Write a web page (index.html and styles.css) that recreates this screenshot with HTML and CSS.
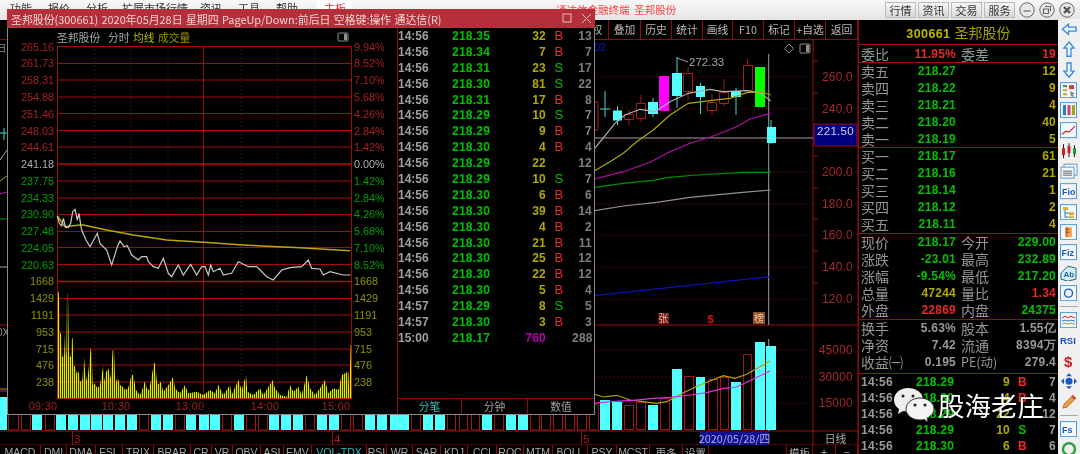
FILE: index.html
```html
<!DOCTYPE html>
<html lang="zh">
<head>
<meta charset="utf-8">
<title>通达信金融终端 圣邦股份</title>
<link rel="stylesheet" href="styles.css">
</head>
<body>
<div class="app">
  <header class="topbar">
    <nav class="menu"><span>功能</span><span>报价</span><span>分析</span><span>扩展市场行情</span><span>资讯</span><span>工具</span><span>帮助</span></nav>
    <span class="board">主板</span>
    <span class="apptitle">通达信金融终端&nbsp; 圣邦股份</span>
    <div class="top-actions">
      <button class="tbtn">行情</button><button class="tbtn">资讯</button><button class="tbtn">交易</button><button class="tbtn">服务</button>
      <svg class="round" viewBox="0 0 16 16"><circle cx="8" cy="8" r="7.2"/><path class="rg" d="M4.5 9h7"/></svg>
      <svg class="round" viewBox="0 0 16 16"><circle cx="8" cy="8" r="7.2"/><path class="rg" d="M6 4.5h5.5v4.500M4.500 7h5v4.500h-5z"/></svg>
      <svg class="round" viewBox="0 0 16 16"><circle cx="8" cy="8" r="7.2"/><path class="rg thick" d="M5 5l6 6M11 5l-6 6"/></svg>
    </div>
  </header>

  <div class="main">
    <section class="chart">
      <div class="toolbar">
        <span class="b1">复权</span><span class="b2">叠加</span><span class="b3">历史</span><span class="b3">统计</span><span class="b4">画线</span><span class="b3">F10</span><span class="b3">标记</span><span class="b3">+自选</span><span class="b2">返回</span>
      </div>
      <svg class="kline" viewBox="0 40 858 405" width="858" height="405">
        <path class="grid-solid" d="M0 325H858M0 431H858M0 445H858M813 40V445M858 40V445"/>
        <path class="grid-dot" d="M594 77H813M594 109H813M594 141H813M594 172H813M594 204H813M594 235H813M594 267H813M594 299H813M594 350H813M594 377H813M594 403H813"/>
        <path class="tick" d="M813 93h5M813 125h5M813 156h5M813 188h5M813 219h5M813 251h5M813 283h5M813 61h5"/>
        <text class="axis" x="853" y="81">260.0</text>
        <text class="axis" x="853" y="113">240.0</text>
        <text class="axis" x="853" y="145">220.0</text>
        <text class="axis" x="853" y="176">200.0</text>
        <text class="axis" x="853" y="208">180.0</text>
        <text class="axis" x="853" y="239">160.0</text>
        <text class="axis" x="853" y="271">140.0</text>
        <text class="axis" x="853" y="303">120.0</text>
        <text class="axis" x="853" y="354">45000</text>
        <text class="axis" x="853" y="381">30000</text>
        <text class="axis" x="853" y="407">15000</text>
        <text class="blue02" x="594" y="51">02</text>
        <path class="icon-line" d="M789 44l4.500 4.500-4.500 4.500-4.500-4.500z"/>
        <rect class="icon-line" x="800" y="44" width="10" height="9" rx="1"/><rect class="icon-fill" x="806" y="45" width="3" height="7"/>

        <path class="line-gray" d="M594 138H813M768.700 54V325M768.700 339V431"/>
        <rect class="pricebox" x="814" y="124" width="43" height="22"/>
        <text class="pricetxt" x="835.500" y="135">221.50</text>

        <path class="wick-r" d="M629 110V114M629 119V125M641 95V103M641 119V122M688 67V73M688 92V100M712 94V102M712 110V115M724 79V92M724 104V107M747.500 59V65"/>
        <path class="wick-c" d="M605 91V117M600 109H610M617.500 106V125M653 98V117M677 57V108M700.500 83V114M736 88V115M771 120V144"/>
        <path class="cand-c" d="M613 110.500h9v10h-9zM648 102h10v12h-10zM672 73h10v23h-10zM696 86h9v11h-9zM731 91h10v6h-10zM767 127h9v16h-9z"/>
        <path class="cand-r" d="M594 102h4v28h-4M624.500 114.500h9v5h-9zM636.500 103.500h9v15h-9zM683.500 73.500h9v18h-9zM707.500 102.500h9v8h-9zM719.500 92.500h9v11h-9zM743.500 65.500h9v25h-9z"/>
        <rect class="cand-m" x="659" y="76" width="10" height="35"/>
        <rect class="cand-g" x="755" y="67" width="10" height="40"/>
        <path class="peak" d="M677 58l11 4"/>
        <text class="peaktxt" x="689" y="66">272.33</text>

        <polyline class="ma ma-w" points="594.700,148.300 615,123.300 625,115 640,109.300 655,111.700 670,101.700 688.300,93.300 710,89.300 723.300,91.700 746.700,90.700 760,92.700 770.700,101"/>
        <polyline class="ma ma-y" points="594.700,170.700 610,161.700 623.300,153.300 636.700,141.700 653.300,130 670,115 688.300,103.300 710,100.700 730,98.300 746.700,92.700 760,91.700 770.700,95"/>
        <polyline class="ma ma-m" points="594.700,179 623.300,171.700 650,162.300 670,151.700 690,143.300 710,137.300 736.700,126.700 750,119 770.700,113.300"/>
        <polyline class="ma ma-g" points="594.700,187.300 623.300,183.300 653.300,180.300 666.700,177.700 696.700,175 743.300,172.300 770.700,172.300"/>
        <polyline class="ma ma-w2" points="594.700,210.700 623.300,206 656.700,202.300 690,197.300 740,192.700 770.700,190"/>
        <polyline class="ma ma-b" points="594,295.700 770,276.700"/>

        <rect class="sig-r" x="658" y="313" width="11" height="11"/><text class="sigtxt" x="663.500" y="322">张</text>
        <text class="sigd" x="710.500" y="323">$</text>
        <rect class="sig-o" x="753" y="312" width="12" height="12"/><text class="sigtxt" x="759" y="322">榜</text>

        <path class="vol-c" d="M0 397h7v33h-7zM32 405h10v25h-10zM56 405h10v25h-10zM68 405h10v25h-10zM80 405h10v25h-10zM91 405h11v25h-11zM103 405h10v25h-10zM115 405h10v25h-10zM127 405h10v25h-10zM151 405h10v25h-10zM163 405h10v25h-10zM186 405h10v25h-10zM199 405h10v25h-10zM210 405h10v25h-10zM234 405h10v25h-10zM269 405h10v25h-10zM281 405h10v25h-10zM293 405h10v25h-10zM317 405h10v25h-10zM329 405h10v25h-10zM365 405h10v25h-10zM377 405h10v25h-10zM390 405h10v25h-10zM400 405h9v25h-9zM423 405h10v25h-10zM435 405h10v25h-10zM482 405h10v25h-10zM506 405h10v25h-10zM518 405h10v25h-10zM600 400h10v30h-10zM612 402h10v28h-10zM648 405h10v25h-10zM672 369h10v61h-10zM696 377h9v53h-9zM731 382h10v48h-10zM755 342h10v88h-10zM766 346h10v84h-10z"/>
        <path class="vol-r" d="M8.500 405h10v25h-10zM21.500 405h9v25h-9zM45.500 405h9v25h-9zM139.500 405h9v25h-9zM175.500 405h9v25h-9zM222.500 405h9v25h-9zM246.500 405h9v25h-9zM258.500 405h9v25h-9zM305.500 405h9v25h-9zM341.500 405h9v25h-9zM353.500 405h9v25h-9zM411.500 405h9v25h-9zM447.500 405h8v25h-8zM459.500 405h8v25h-8zM471.500 405h8v25h-8zM494.500 405h9v25h-9zM530.500 405h9v25h-9zM541.500 405h9v25h-9zM553.500 405h9v25h-9zM565.500 405h9v25h-9zM577.500 405h9v25h-9zM589.500 405h9v25h-9zM624.500 405.500h9v24h-9zM636.500 402.500h9v27h-9zM660.500 398.500h9v31h-9zM684.500 376.500h9v53h-9zM708.500 379.500h9v50h-9zM720.500 377.500h8v52h-8zM743.500 354.500h8v75h-8z"/>
        <polyline class="ma ma-y" points="594.700,394.300 603.300,397 616.700,395.300 630,400 643.300,401.700 656.700,403.300 666.700,401.700 683.300,392.700 700,385 723.300,375.700 735,378.300 746.700,374.300 770,361"/>
        <polyline class="ma ma-mv" points="594.700,403.300 610,401.700 633.300,400.300 653.300,398.300 670,397.300 690,395 706.700,392.700 723.300,388.300 736.700,387 753.300,379 770,371"/>

        <text class="sliver" x="-4" y="52">日</text>
        <text class="sliver" x="-3" y="336">0X</text>
        <path class="wick-c" d="M4 128V140M0 133H7"/>
        <path class="line-gray thin" d="M0 160L7 150"/>
        <path class="sl-y" d="M0 181L7 176"/>
        <path class="sl-m" d="M0 194L7 192"/>
        <path class="sl-g" d="M0 219H7"/>
        <path class="line-gray thin" d="M0 267H7"/>
        <path class="sl-y" d="M0 389H7"/>
        <path class="sl-m" d="M0 391H7"/>

        <path class="grid-solid" d="M72.500 431V445M332.500 431V445M581.500 431V445"/>
        <text class="dnum" x="74" y="443">3</text>
        <text class="dnum" x="334" y="443">4</text>
        <text class="dnum" x="583" y="443">5</text>
        <rect class="datebox" x="700" y="432" width="69" height="13"/>
        <text class="datetxt" x="734.500" y="442.500">2020/05/28/四</text>
        <text class="rixian" x="835.500" y="443">日线</text>
      </svg>
      <nav class="tabs">
        <span>MACD</span><span>DMI</span><span>DMA</span><span>FSL</span><span>TRIX</span><span>BRAR</span><span>CR</span><span>VR</span><span>OBV</span><span>ASI</span><span>EMV</span><span class="on">VOL-TDX</span><span>RSI</span><span>WR</span><span>SAR</span><span>KDJ</span><span>CCI</span><span>ROC</span><span>MTM</span><span>BOLL</span><span>PSY</span><span>MCST</span><span>更多</span><span>设置</span><span class="blank"></span><span>模板</span><span>+</span><span>−</span>
      </nav>
    </section>

    <aside class="hq">
      <div class="hq-title"><b>300661</b> 圣邦股份</div>
      <div class="hq-sec wb"><div class="q"><i>委比</i><em class="r">11.95%</em><i>委差</i><em class="r">19</em></div></div>
      <div class="hq-sec five">
        <div class="q"><i>卖五</i><em class="g">218.27</em><i></i><em class="y">12</em></div>
        <div class="q"><i>卖四</i><em class="g">218.22</em><i></i><em class="y">9</em></div>
        <div class="q"><i>卖三</i><em class="g">218.21</em><i></i><em class="y">4</em></div>
        <div class="q"><i>卖二</i><em class="g">218.20</em><i></i><em class="y">40</em></div>
        <div class="q"><i>卖一</i><em class="g">218.19</em><i></i><em class="y">5</em></div>
      </div>
      <div class="hq-sec five bid">
        <div class="q"><i>买一</i><em class="g">218.17</em><i></i><em class="y">61</em></div>
        <div class="q"><i>买二</i><em class="g">218.16</em><i></i><em class="y">21</em></div>
        <div class="q"><i>买三</i><em class="g">218.14</em><i></i><em class="y">1</em></div>
        <div class="q"><i>买四</i><em class="g">218.12</em><i></i><em class="y">2</em></div>
        <div class="q"><i>买五</i><em class="g">218.11</em><i></i><em class="y">4</em></div>
      </div>
      <div class="hq-sec five bid">
        <div class="q"><i>现价</i><em class="g">218.17</em><i>今开</i><em class="g">229.00</em></div>
        <div class="q"><i>涨跌</i><em class="g">-23.01</em><i>最高</i><em class="g">232.89</em></div>
        <div class="q"><i>涨幅</i><em class="g">-9.54%</em><i>最低</i><em class="g">217.20</em></div>
        <div class="q"><i>总量</i><em class="y">47244</em><i>量比</i><em class="r">1.34</em></div>
        <div class="q"><i>外盘</i><em class="r">22869</em><i>内盘</i><em class="g">24375</em></div>
      </div>
      <div class="hq-sec fin">
        <div class="q"><i>换手</i><em class="w">5.63%</em><i>股本</i><em class="w">1.55亿</em></div>
        <div class="q"><i>净资</i><em class="w">7.42</em><i>流通</i><em class="w">8394万</em></div>
        <div class="q"><i>收益㈠</i><em class="w">0.195</em><i class="pe">PE(动)</i><em class="w">279.4</em></div>
      </div>
      <div class="hq-sec side-ticks">
        <div class="st"><span>14:56</span><span class="g">218.29</span><span class="y">9</span><span class="r">B</span><span class="w">7</span></div>
        <div class="st"><span>14:56</span><span class="g">218.30</span><span class="y">4</span><span class="r">B</span><span class="w">4</span></div>
        <div class="st"><span>14:56</span><span class="g">218.29</span><span class="y">22</span><span></span><span class="w">12</span></div>
        <div class="st"><span>14:56</span><span class="g">218.29</span><span class="y">10</span><span class="gs">S</span><span class="w">7</span></div>
        <div class="st"><span>14:56</span><span class="g">218.30</span><span class="y">6</span><span class="r">B</span><span class="w">6</span></div>
      </div>
    </aside>

    <nav class="rail">
      <svg viewBox="0 0 16 16"><path class="ib" d="M1.500 8L7.500 3v3h7.500v4H7.500v3z"/></svg>
      <svg viewBox="0 0 16 16"><path class="ib" d="M8 1L13 7H10V15H6V7H3z"/></svg>
      <svg viewBox="0 0 16 16"><path class="ib" d="M8 15L13 9H10V1H6V9H3z"/></svg>
      <svg viewBox="0 0 18 16"><rect class="fr" x=".5" y=".5" width="16" height="15"/><path d="M3 3h4v2H3z" fill="#1a9a3a"/><path d="M3 7h4v2H3zM3 11h4v2H3z" fill="#c8a020"/><path d="M9 3h5v4H9z" fill="#d04040"/><path d="M10 9l5 2-2 1 1 3-3-1z" fill="#888"/></svg>
      <svg viewBox="0 0 18 16"><rect class="fr" x=".5" y=".5" width="16" height="15"/><path d="M3 3h3v10H3z" fill="#2a7ad0"/><path d="M7.500 3h3v10h-3z" fill="#d04060"/><path d="M12 3h3v10h-3z" fill="#a0a020"/></svg>
      <svg viewBox="0 0 18 16"><rect class="fr" x=".5" y=".5" width="16" height="15"/><path d="M2 12l4-3 3 1 6-6" fill="none" stroke="#d02020" stroke-width="1.200"/></svg>
      <svg viewBox="0 0 18 16"><path d="M3.500 1v14M9 0v14M14.500 2v12" stroke="#202020"/><path d="M2 5h3v7H2z" fill="#d02020"/><path d="M7.500 3h3v7h-3z" fill="#d02020"/><path d="M13 5h3v6h-3z" fill="#10a030"/></svg>
      <svg viewBox="0 0 18 16"><rect class="fr2" x="4" y="1" width="13" height="11"/><rect class="fr2" x="1" y="4" width="13" height="11"/><path d="M3 8h9M3 10h9M3 12h9" stroke="#666"/></svg>
      <svg viewBox="0 0 18 16"><rect class="fr" x=".5" y=".5" width="16" height="15"/><text class="itx" x="2" y="12">Fio</text></svg>
      <svg viewBox="0 0 18 16"><rect class="fr" x=".5" y=".5" width="16" height="15"/><path d="M3 3h5v3H3z" fill="#e0b020"/><path d="M9 8h5v3H9zM9 12h5v2H9z" fill="#e0b020"/><path d="M5 6v7h4M5 9h4" fill="none" stroke="#2a7ad0"/></svg>
      <svg viewBox="0 0 18 16"><rect class="fr" x=".5" y=".5" width="16" height="15"/><path d="M5 3h7v10H5z" fill="#f0b060"/><path d="M7 3v10M10 5H5M10 8H5" stroke="#c04020"/></svg>
      <svg viewBox="0 0 18 16"><rect class="fr" x=".5" y=".5" width="16" height="15"/><text class="itx" x="1.500" y="12">Fiz</text></svg>
      <svg viewBox="0 0 18 16"><path d="M1 8L8 1l8 2v11l-8 2-7-2z" fill="#d8ecf8" stroke="#1a6a90"/><text class="itx t" x="3.500" y="12">Ab</text></svg>
      <svg viewBox="0 0 18 16"><rect class="fr" x=".5" y=".5" width="16" height="15"/><circle cx="8.500" cy="8" r="4" fill="none" stroke="#1a5ac0" stroke-width="1.400"/></svg>
      <hr>
      <svg viewBox="0 0 18 16"><rect class="fr" x=".5" y=".5" width="16" height="15"/><path d="M2 6l3-2 3 2 3-2 4 2" fill="none" stroke="#d02020"/><path d="M2 9l3-1 3 1 3-1 4 1" fill="none" stroke="#2a7ad0"/><path d="M2 12l3-1 3 1 3-1 4 1" fill="none" stroke="#a0a020"/></svg>
      <svg viewBox="0 0 18 16"><text class="rsi" x="0" y="12">RSI</text></svg>
      <svg viewBox="0 0 18 16"><text class="dollar" x="4" y="14">$</text></svg>
      <svg viewBox="0 0 18 16"><path d="M9 0l3 3H6zM9 16l-3-3h6zM1 8l3-3v6zM17 8l-3 3V5z" fill="#1a5ac0"/><circle cx="9" cy="8" r="3.500" fill="#1a5ac0"/></svg>
      <svg viewBox="0 0 18 16"><path d="M3 15l1-4L13 2l3 3-9 9z" fill="#e8a040" stroke="#a05020" stroke-width=".7"/><path d="M12 3l3 3" stroke="#d04040" stroke-width="2"/></svg>
      <hr>
      <svg viewBox="0 0 18 16"><rect class="fr" x=".5" y=".5" width="16" height="15"/><text class="itx" x="2" y="12">Fs</text></svg>
      <svg viewBox="0 0 18 16"><circle cx="9" cy="8" r="6" fill="none" stroke="#30a040" stroke-width="2.500"/></svg>
    </nav>
  </div>

  <section class="win">
    <header class="win-title">
      <span>圣邦股份(300661) 2020年05月28日 星期四 PageUp/Down:前后日 空格键:操作 通达信(R)</span>
      <svg class="win-ctl" viewBox="0 0 30 11" width="30" height="11"><rect x="1" y="1" width="8" height="8"/><path d="M20 1l9 9M29 1l-9 9"/></svg>
    </header>
    <div class="win-body">
      <svg class="minute" viewBox="8 28 389 385" width="389" height="385">
        <text class="mt-w" x="57" y="42">圣邦股份</text>
        <text class="mt-w" x="108" y="42">分时</text>
        <text class="mt-y" x="133" y="42">均线</text>
        <text class="mt-o" x="158" y="42">成交量</text>
        <rect class="icon-line" x="338" y="33" width="10" height="8" rx="1"/><rect class="icon-fill" x="344" y="34" width="3" height="6"/>

        <path class="grid-dot" d="M95 46V398M131 46V398M168 46V398M241 46V398M278 46V398M315 46V398"/>
        <path class="grid-solid" d="M57.500 46V398M203.500 46V398M351.500 46V398M57 46.500H352M57 63.500H352M57 80H352M57 97H352M57 113.500H352M57 130.500H352M57 147H352M57 231.500H352M57 247.500H352M57 264.500H352M57 198H352M57 214.500H352M57 181H352M57 298.500H352M57 315H352M57 332H352M57 349H352M57 365H352M57 382H352M57 398.500H352"/>
        <path class="grid-bold" d="M57 164H352M57 281.500H352"/>

        <text class="lr" x="54" y="51">265.16</text><text class="lr" x="54" y="67">261.73</text><text class="lr" x="54" y="84">258.31</text><text class="lr" x="54" y="101">254.88</text><text class="lr" x="54" y="118">251.46</text><text class="lr" x="54" y="135">248.03</text><text class="lr" x="54" y="151">244.61</text>
        <text class="lw" x="54" y="168">241.18</text>
        <text class="lg" x="54" y="185">237.75</text><text class="lg" x="54" y="202">234.33</text><text class="lg" x="54" y="218">230.90</text><text class="lg" x="54" y="235">227.48</text><text class="lg" x="54" y="252">224.05</text><text class="lg" x="54" y="269">220.63</text>
        <text class="ly" x="54" y="285">1668</text><text class="ly" x="54" y="302">1429</text><text class="ly" x="54" y="319">1191</text><text class="ly" x="54" y="336">953</text><text class="ly" x="54" y="353">715</text><text class="ly" x="54" y="369">476</text><text class="ly" x="54" y="386">238</text>

        <text class="rr" x="354" y="51">9.94%</text><text class="rr" x="354" y="67">8.52%</text><text class="rr" x="354" y="84">7.10%</text><text class="rr" x="354" y="101">5.68%</text><text class="rr" x="354" y="118">4.26%</text><text class="rr" x="354" y="135">2.84%</text><text class="rr" x="354" y="151">1.42%</text>
        <text class="rw" x="354" y="168">0.00%</text>
        <text class="rg2" x="354" y="185">1.42%</text><text class="rg2" x="354" y="202">2.84%</text><text class="rg2" x="354" y="218">4.26%</text><text class="rg2" x="354" y="235">5.68%</text><text class="rg2" x="354" y="252">7.10%</text><text class="rg2" x="354" y="269">8.52%</text>
        <text class="ry" x="354" y="285">1668</text><text class="ry" x="354" y="302">1429</text><text class="ry" x="354" y="319">1191</text><text class="ry" x="354" y="336">953</text><text class="ry" x="354" y="353">715</text><text class="ry" x="354" y="369">476</text><text class="ry" x="354" y="386">238</text>

        <defs><pattern id="stripes" width="6" height="12" patternUnits="userSpaceOnUse"><rect class="stripe" width="3.600" height="12"/></pattern></defs>
        <polygon fill="url(#stripes)" transform="translate(0 225) scale(.33333)" points="172,520 172,200 176,200 178,240 180,320 184,330 187,395 192,395 195,325 199,395 201,205 204,205 207,395 212,395 215,340 218,340 220,420 226,425 230,445 236,440 240,470 247,465 252,395 255,440 262,470 268,410 272,370 275,370 278,480 285,475 292,490 300,480 310,420 313,470 318,440 325,430 332,460 338,375 342,375 346,480 352,455 360,480 368,485 376,495 384,490 395,450 400,450 408,495 420,510 428,490 436,465 440,490 447,495 452,470 462,415 465,415 472,480 482,470 490,500 505,480 520,455 525,490 540,505 555,480 565,505 590,500 610,510 630,495 645,505 655,480 670,510 690,480 695,510 715,465 725,495 738,450 742,500 760,510 780,490 790,510 818,465 825,490 840,510 860,515 870,480 880,500 895,485 905,510 920,450 930,490 945,510 960,490 975,465 985,505 1000,490 1015,495 1025,450 1035,445 1045,440 1048,500 1052,360 1055,360 1055,520"/>
        <g transform="translate(0 225) scale(.33333)">
          <polyline class="avg" points="172,-27 195,5 240,0 250,0 320,15 400,30 500,45 610,52 730,60 900,68 1050,77"/>
          <polyline class="price" points="172,-27 178,-5 185,3 190,-20 197,7 205,7 212,-5 218,-40 225,-47 232,-15 237,-35 243,5 245,15 258,45 270,65 292,25 300,55 320,75 335,120 352,65 360,48 372,65 382,62 395,90 415,105 425,95 440,95 445,110 460,125 475,130 490,100 505,145 515,155 535,120 550,150 572,118 590,150 605,125 615,125 625,150 632,120 640,140 660,130 670,150 695,145 715,110 745,125 770,125 800,155 820,165 845,135 870,128 905,125 925,105 935,130 960,132 970,150 990,140 1030,150 1052,150"/>
        </g>

        <text class="tm" x="43" y="410">09:30</text><text class="tm" x="116" y="410">10:30</text><text class="tm" x="190" y="410">13:00</text><text class="tm" x="265" y="410">14:00</text><text class="tm" x="336" y="410">15:00</text>
      </svg>
      <div class="tick-pane">
        <div class="ticks">
          <div class="tk"><span class="t">14:56</span><span class="p">218.35</span><span class="v">32</span><span class="rd">B</span><span class="n">13</span></div>
          <div class="tk"><span class="t">14:56</span><span class="p">218.34</span><span class="v">7</span><span class="rd">B</span><span class="n">7</span></div>
          <div class="tk"><span class="t">14:56</span><span class="p">218.31</span><span class="v">23</span><span class="gn">S</span><span class="n">17</span></div>
          <div class="tk"><span class="t">14:56</span><span class="p">218.30</span><span class="v">81</span><span class="gn">S</span><span class="n">22</span></div>
          <div class="tk"><span class="t">14:56</span><span class="p">218.31</span><span class="v">17</span><span class="rd">B</span><span class="n">8</span></div>
          <div class="tk"><span class="t">14:56</span><span class="p">218.29</span><span class="v">10</span><span class="gn">S</span><span class="n">7</span></div>
          <div class="tk"><span class="t">14:56</span><span class="p">218.29</span><span class="v">9</span><span class="rd">B</span><span class="n">7</span></div>
          <div class="tk"><span class="t">14:56</span><span class="p">218.30</span><span class="v">4</span><span class="rd">B</span><span class="n">4</span></div>
          <div class="tk"><span class="t">14:56</span><span class="p">218.29</span><span class="v">22</span><span></span><span class="n">12</span></div>
          <div class="tk"><span class="t">14:56</span><span class="p">218.29</span><span class="v">10</span><span class="gn">S</span><span class="n">7</span></div>
          <div class="tk"><span class="t">14:56</span><span class="p">218.30</span><span class="v">6</span><span class="rd">B</span><span class="n">6</span></div>
          <div class="tk"><span class="t">14:56</span><span class="p">218.30</span><span class="v">39</span><span class="rd">B</span><span class="n">14</span></div>
          <div class="tk"><span class="t">14:56</span><span class="p">218.30</span><span class="v">4</span><span class="rd">B</span><span class="n">2</span></div>
          <div class="tk"><span class="t">14:56</span><span class="p">218.30</span><span class="v">21</span><span class="rd">B</span><span class="n">11</span></div>
          <div class="tk"><span class="t">14:56</span><span class="p">218.30</span><span class="v">25</span><span class="rd">B</span><span class="n">12</span></div>
          <div class="tk"><span class="t">14:56</span><span class="p">218.30</span><span class="v">22</span><span class="rd">B</span><span class="n">12</span></div>
          <div class="tk"><span class="t">14:56</span><span class="p">218.30</span><span class="v">5</span><span class="rd">B</span><span class="n">4</span></div>
          <div class="tk"><span class="t">14:57</span><span class="p">218.29</span><span class="v">8</span><span class="gn">S</span><span class="n">5</span></div>
          <div class="tk"><span class="t">14:57</span><span class="p">218.30</span><span class="v">3</span><span class="rd">B</span><span class="n">3</span></div>
          <div class="tk"><span class="t">15:00</span><span class="p">218.17</span><span class="v big">760</span><span></span><span class="n">288</span></div>
        </div>
        <div class="pane-tabs"><span class="on">分笔</span><span>分钟</span><span>数值</span></div>
      </div>
    </div>
  </section>

  <div class="watermark">
    <svg viewBox="0 0 42 36" width="42" height="36">
      <path class="wm-a" d="M15 1C7 1 1 6 1 13c0 4 2 7 5 9l-1 5 5-3c2 .6 3.500 .8 5 .8 8 0 15-5 15-12S23 1 15 1z"/>
      <circle class="wm-eye" cx="10" cy="9" r="1.500"/><circle class="wm-eye" cx="20" cy="9" r="1.500"/>
      <path class="wm-b" d="M27 11c-8 0-14 5-14 11s6 11 14 11c1.500 0 3-.2 4-.6l4 2.600-.8-4c3.800-2 6.800-5 6.800-9 0-6-6-11-14-11z"/>
      <circle class="wm-eye" cx="22" cy="18" r="1.500"/><circle class="wm-eye" cx="32" cy="18" r="1.500"/>
    </svg>
    <span>股海老庄</span>
  </div>
</div>
</body>
</html>
```
FILE: styles.css
```css
* { box-sizing: border-box; }
html, body { margin: 0; padding: 0; background: #000; }
body { width: 1080px; height: 454px; overflow: hidden; font-family: "Noto Sans CJK SC", "Liberation Sans", sans-serif; }
.app { position: relative; width: 1080px; height: 454px; overflow: hidden; background: #000; display: flex; flex-direction: column; filter: blur(.35px); }

/* top bar */
.topbar { height: 20px; flex: none; display: flex; align-items: flex-start; background: linear-gradient(#f8f8f8, #e4e4e4); overflow: hidden; position: relative; }
.menu { display: flex; padding: 0 0 0 10px; font-size: 11px; line-height: 14px; color: #333; margin-top: 1px; }
.menu span { margin-right: 16px; }
.menu span:nth-child(3) { margin-right: 14px; }
.menu span:nth-child(4) { margin-right: 12px; }
.board { margin-left: 3px; width: 35px; padding: 0 7px; font-size: 11px; line-height: 14px; margin-top: 1px; color: #e03030; background: #fff; height: 20px; overflow: hidden; white-space: nowrap; }
.apptitle { margin-left: 204px; margin-top: 2px; font-size: 10.500px; line-height: 15px; color: #ff3a3a; white-space: nowrap; }
.top-actions { margin-left: auto; display: flex; align-items: center; height: 20px; padding-right: 5px; gap: 2px; }
.tbtn { width: 31px; height: 16px; padding: 0; font: 11px/14px "Noto Sans CJK SC", sans-serif; color: #333; background: linear-gradient(#f6f6f6, #d8d8d8); border: 1px solid #bbb; }
.round { width: 16px; height: 16px; margin-left: 2px; }
.round circle { fill: #e8e8e8; stroke: #666; }
.rg { fill: none; stroke: #666; stroke-width: 1.200; }
.rg.thick { stroke: #555; stroke-width: 2.400; }

/* main */
.main { height: 434px; flex: none; display: flex; }
.chart { width: 858px; flex: none; display: flex; flex-direction: column; }
.toolbar { height: 20px; flex: none; display: flex; justify-content: flex-end; border-bottom: 1px solid #8c0c0c; background: #000; }
.toolbar span { border-right: 1px solid #8c0c0c; font-size: 10.800px; line-height: 19px; text-align: center; color: #b8b8b8; }
.b1 { width: 32px; text-align: right; padding-right: 2px; }
.b2 { width: 32px; }
.b3 { width: 31px; }
.b4 { width: 30px; }
.kline { display: block; flex: none; }
.tabs { flex: none; height: 9px; overflow: hidden; display: grid; grid-template-columns: 41px 26px 29px 27px 31px 37px 21px 21px 28px 23px 28px 55px 20px 26px 28px 27px 29px 27px 29px 35px 29px 33px 33px 26px 78px 26px 23px 22px; }
.tabs span { border-right: 1px solid #8c0c0c; font: 10.500px/13px "Liberation Sans", sans-serif; color: #a8a8a8; text-align: center; padding-top: 1px; }
.tabs span:nth-child(23), .tabs span:nth-child(24), .tabs span:nth-child(26) { font-family: "Noto Sans CJK SC", sans-serif; }
.tabs .on { color: #36b8b8; }
.tabs .blank { border-right: 1px solid #8c0c0c; }

/* svg chart parts */
.grid-solid { stroke: #a00c0c; fill: none; stroke-width: 1; }
.grid-bold { stroke: #b80808; fill: none; stroke-width: 1.500; }
.grid-dot { stroke: #8c1010; fill: none; stroke-width: 1; stroke-dasharray: 1 3; }
.tick { stroke: #a00c0c; fill: none; }
.axis { font: 12px "Liberation Sans", sans-serif; fill: #a82828; text-anchor: end; letter-spacing: .2px; }
.blue02 { font: 11px "Liberation Sans", sans-serif; fill: #1414c8; }
.icon-line { fill: none; stroke: #909090; }
.icon-fill { fill: #909090; }
.line-gray { stroke: #a0a0a0; fill: none; stroke-width: 1; }
.thin { stroke-width: 1; }
.pricebox { fill: #000080; stroke: #a00c0c; }
.pricetxt { font: 11.500px "Liberation Sans", sans-serif; fill: #d0d0e8; text-anchor: middle; letter-spacing: .3px; }
.wick-r { stroke: #a01c1c; fill: none; }
.wick-c { stroke: #40d8d8; fill: none; }
.cand-c { fill: #54ffff; }
.cand-r { fill: #000; stroke: #a81c1c; }
.cand-m { fill: #ff00ff; }
.cand-g { fill: #00ff00; }
.peak { stroke: #a0a0a0; fill: none; }
.peaktxt { font: 11.500px "Liberation Sans", sans-serif; fill: #a8a8a8; }
.ma { fill: none; stroke-width: 1.200; }
.ma-w { stroke: #b0b0b0; }
.ma-y { stroke: #b0a800; }
.ma-m { stroke: #b010a8; }
.ma-g { stroke: #009000; }
.ma-w2 { stroke: #909090; }
.ma-b { stroke: #1010b8; }
.ma-mv { stroke: #e030e0; }
.sig-r { fill: #701010; }
.sig-o { fill: #8a5020; }
.sigtxt { font: 10px "Noto Sans CJK SC", sans-serif; fill: #f0c0b0; text-anchor: middle; }
.sigd { font: bold 11px "Liberation Sans", sans-serif; fill: #d81010; text-anchor: middle; }
.vol-c { fill: #54ffff; }
.vol-r { fill: #000; stroke: #a01818; }
.sl-y { stroke: #a8a000; fill: none; }
.sl-m { stroke: #c010c0; fill: none; }
.sl-g { stroke: #00a000; fill: none; }
.sliver { font: 10.500px "Noto Sans CJK SC", sans-serif; fill: #909090; }
.dnum { font: 11.500px "Liberation Sans", sans-serif; fill: #a02020; }
.datebox { fill: #101090; }
.datetxt { font: 10.800px "Noto Sans CJK SC", sans-serif; fill: #b0b0e0; text-anchor: middle; }
.rixian { font: 10.800px "Noto Sans CJK SC", sans-serif; fill: #a8a8a8; text-anchor: middle; }

/* right quote panel */
.hq { width: 200px; flex: none; display: flex; flex-direction: column; border-left: 1px solid #8c0c0c; }
.hq-title { height: 24px; flex: none; text-align: center; font-size: 14px; line-height: 24px; color: #a8a000; }
.hq-title b { font: bold 12.500px "Liberation Sans", sans-serif; letter-spacing: .4px; color: #c0b800; margin-right: 1px; }
.hq-sec { border-top: 1px solid #a00c0c; flex: none; }
.wb { height: 18px; }
.five { height: 85px; }
.five.bid { height: 86px; }
.fin { height: 54px; }
.q { height: 16.800px; display: grid; grid-template-columns: 44px 51px 1fr; padding: 0 2px; align-items: center; }
.wb .q { height: 17px; }
.q i { font-style: normal; font-size: 14px; line-height: 16px; color: #969696; white-space: nowrap; }
.q em { font: bold 12px/16px "Liberation Sans", sans-serif; letter-spacing: .25px; text-align: right; white-space: nowrap; }
.q i:nth-child(3) { grid-column: 3; grid-row: 1; margin-left: 5px; }
.q em:nth-child(4) { grid-column: 3; grid-row: 1; }
.q .pe { font-size: 12.500px; }
.g { color: #00c000; }
.r { color: #e82828; }
.y { color: #b0a800; }
.w { color: #9a9a9a; }
.gs { color: #00c000; }
.side-ticks { flex: 1; }
.st { display: grid; grid-template-columns: 55px 42px 52px 25px 1fr; height: 16px; padding: 0 2px; font: bold 12px/16px "Liberation Sans", sans-serif; letter-spacing: .25px; color: #9a9a9a; }
.st span:nth-child(3), .st span:nth-child(5) { text-align: right; }
.st span:nth-child(4) { text-align: center; }

/* icon rail */
.rail { width: 22px; flex: none; display: flex; flex-direction: column; align-items: center; background: #f0f0f0; margin-top: -1px; height: 435px; overflow: hidden; position: relative; }
.rail svg { height: 20.300px; flex: none; width: 18px; padding: 2px 0; display: block; }
.rail hr { width: 18px; height: 7px; margin: 0; border: 0; flex: none; background: linear-gradient(#f0f0f0 3px, #aaa 3px, #aaa 4px, #f0f0f0 4px); }
.ib { fill: #e8f4ff; stroke: #3a8ae0; stroke-width: 1.300; }
.fr { fill: #f4f8fc; stroke: #4a9ae0; }
.fr2 { stroke: #6a9ac0; fill: #f4f8fc; }
.itx { font: bold 9px "Liberation Sans", sans-serif; fill: #1a5ac0; }
.itx.t { font-size: 8px; fill: #1a6a90; }
.rsi { font: bold 9.500px "Liberation Sans", sans-serif; fill: #1a4ad0; }
.dollar { font: bold 15px "Liberation Sans", sans-serif; fill: #c82020; }

/* floating window */
.win { position: absolute; left: 7px; top: 9px; width: 588px; height: 406px; display: flex; flex-direction: column; background: #000; border: 1px solid #8a8a8a; border-top: 0; }
.win-title { height: 19px; flex: none; margin: 0 -1px; background: #b3303a; color: #f2d4d4; font-size: 10.900px; line-height: 18px; padding-left: 4px; display: flex; align-items: center; white-space: nowrap; word-spacing: .9px; }
.win-ctl { margin-left: auto; margin-right: 3px; }
.win-ctl rect, .win-ctl path { fill: none; stroke: #e8b8b8; stroke-width: 1; }
.win-body { flex: 1; display: flex; min-height: 0; }
.minute { flex: none; display: block; }
.mt-w { font: 10.800px "Noto Sans CJK SC", sans-serif; fill: #a8a8a8; }
.mt-y { font: 10.800px "Noto Sans CJK SC", sans-serif; fill: #b0b000; }
.mt-o { font: 10.800px "Noto Sans CJK SC", sans-serif; fill: #a09000; }
.lr, .lw, .lg, .ly { font: 10.800px "Liberation Sans", sans-serif; text-anchor: end; }
.rr, .rw, .rg2, .ry { font: 10.800px "Liberation Sans", sans-serif; }
.lr, .rr { fill: #a82020; }
.lw, .rw { fill: #b0b0b0; }
.lg, .rg2 { fill: #00a000; }
.ly, .ry { fill: #909000; }
.stripe { fill: #e8e800; }
.avg { fill: none; stroke: #b8a800; stroke-width: 4.500; }
.price { fill: none; stroke: #c8c8c8; stroke-width: 3.600; }
.tm { font: 10.800px "Liberation Sans", sans-serif; fill: #a02020; text-anchor: middle; letter-spacing: .3px; }
.tick-pane { flex: 1; min-width: 0; display: flex; flex-direction: column; border-left: 1px solid #8c0c0c; }
.ticks { flex: 1; }
.tk { display: grid; grid-template-columns: 54px 48px 46px 26px 1fr; height: 15.900px; font: bold 12px/16px "Liberation Sans", sans-serif; letter-spacing: .25px; padding-right: 2px; }
.tk .t { color: #a0a0a0; letter-spacing: 0; }
.tk .p { color: #00c000; }
.tk .v { color: #b0a800; text-align: right; }
.tk .big { color: #b000b0; }
.tk .n { color: #7e7e7e; text-align: right; }
.tk .rd { color: #e82828; text-align: center; font-weight: normal; font-size: 13px; }
.tk .gn { color: #00c000; text-align: center; font-weight: normal; font-size: 13px; }
.pane-tabs { height: 16px; flex: none; display: grid; grid-template-columns: 64px 66px 1fr; border-top: 1px solid #8c0c0c; }
.pane-tabs span { border-right: 1px solid #8c0c0c; text-align: center; font-size: 10.800px; line-height: 15px; color: #a0a0a0; }
.pane-tabs span:last-child { border-right: 0; }
.pane-tabs .on { color: #36b8b8; }

/* watermark */
.watermark { position: absolute; left: 893px; top: 387px; display: flex; align-items: center; gap: 3px; color: #fff; font-size: 26.500px; line-height: 36px; white-space: nowrap; }
.wm-a { fill: #eee; }
.wm-b { fill: #f4f4f4; stroke: #333; stroke-width: 1; }
.wm-eye { fill: #222; }
```
